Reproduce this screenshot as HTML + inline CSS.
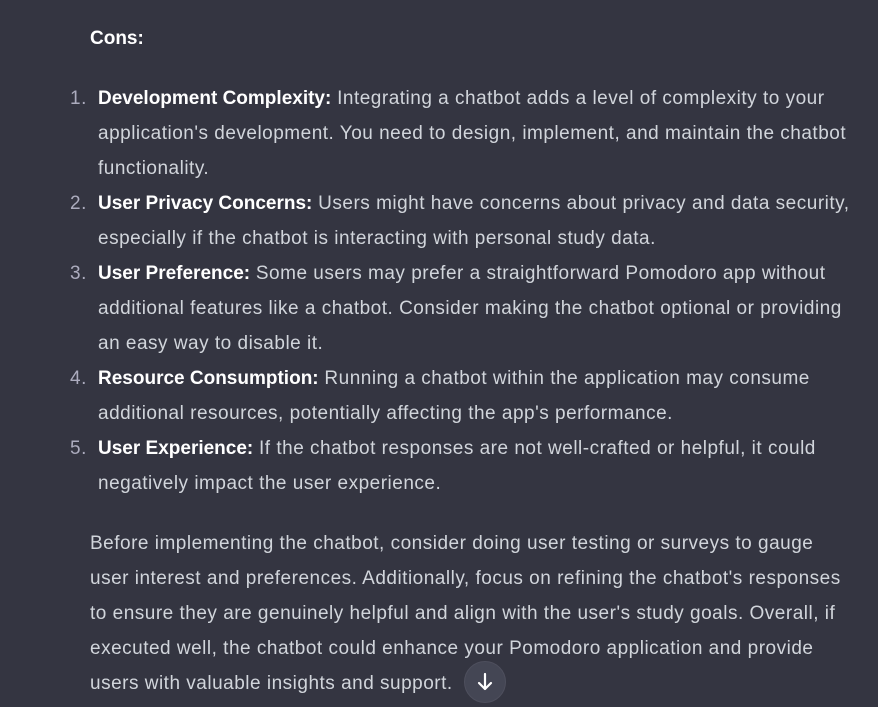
<!DOCTYPE html>
<html><head><meta charset="utf-8"><style>
html,body{margin:0;padding:0;width:878px;height:707px;background:#343541;overflow:hidden}
body{font-family:"Liberation Sans",sans-serif;font-size:19px;color:#d1d5db;letter-spacing:0.5px}
.l{position:absolute;white-space:nowrap;line-height:35px;height:35px;margin-top:1px}
b{color:#fff;font-weight:bold;letter-spacing:0px}
.n{position:absolute;left:70px;color:#acacbe}
.btn{position:absolute;left:464px;top:661px;width:42px;height:42px;border-radius:50%;background:#444654;border:1px solid #4e4f5d;box-sizing:border-box}
</style></head><body>
<div class="l" style="left:90px;top:20px"><b>Cons:</b></div>

<div class="l n" style="top:80px">1.</div>
<div class="l" style="left:98px;top:80px"><b>Development Complexity:</b> Integrating a chatbot adds a level of complexity to your</div>
<div class="l" style="left:98px;top:115px">application's development. You need to design, implement, and maintain the chatbot</div>
<div class="l" style="left:98px;top:150px">functionality.</div>
<div class="l n" style="top:185px">2.</div>
<div class="l" style="left:98px;top:185px"><b>User Privacy Concerns:</b> Users might have concerns about privacy and data security,</div>
<div class="l" style="left:98px;top:220px">especially if the chatbot is interacting with personal study data.</div>
<div class="l n" style="top:255px">3.</div>
<div class="l" style="left:98px;top:255px"><b>User Preference:</b> Some users may prefer a straightforward Pomodoro app without</div>
<div class="l" style="left:98px;top:290px">additional features like a chatbot. Consider making the chatbot optional or providing</div>
<div class="l" style="left:98px;top:325px">an easy way to disable it.</div>
<div class="l n" style="top:360px">4.</div>
<div class="l" style="left:98px;top:360px"><b>Resource Consumption:</b> Running a chatbot within the application may consume</div>
<div class="l" style="left:98px;top:395px">additional resources, potentially affecting the app's performance.</div>
<div class="l n" style="top:430px">5.</div>
<div class="l" style="left:98px;top:430px"><b>User Experience:</b> If the chatbot responses are not well-crafted or helpful, it could</div>
<div class="l" style="left:98px;top:465px">negatively impact the user experience.</div>

<div class="l" style="left:90px;top:525px">Before implementing the chatbot, consider doing user testing or surveys to gauge</div>
<div class="l" style="left:90px;top:560px">user interest and preferences. Additionally, focus on refining the chatbot's responses</div>
<div class="l" style="left:90px;top:595px">to ensure they are genuinely helpful and align with the user's study goals. Overall, if</div>
<div class="l" style="left:90px;top:630px">executed well, the chatbot could enhance your Pomodoro application and provide</div>
<div class="l" style="left:90px;top:665px">users with valuable insights and support.</div>
<div class="btn"><svg width="40" height="40" viewBox="0 0 40 40" style="position:absolute;left:0;top:0"><path d="M20 12v15M14 21l6 6 6-6" stroke="#fff" stroke-width="2.2" fill="none" stroke-linecap="round" stroke-linejoin="round"/></svg></div>
</body></html>
